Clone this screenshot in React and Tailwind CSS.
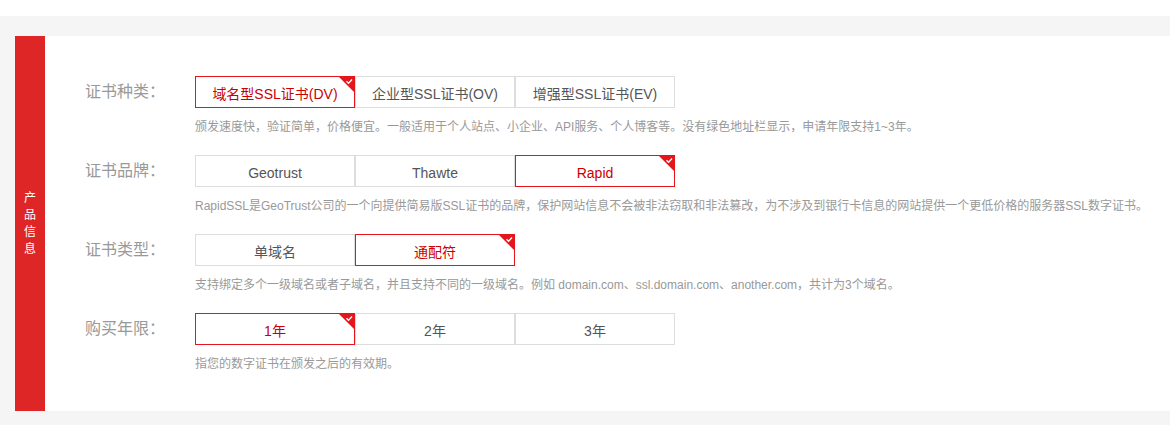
import React, { useState } from 'react';

const rows = [
  {
    label: '证书种类：',
    options: ['域名型SSL证书(DV)', '企业型SSL证书(OV)', '增强型SSL证书(EV)'],
    selected: 0,
    desc: '颁发速度快，验证简单，价格便宜。一般适用于个人站点、小企业、API服务、个人博客等。没有绿色地址栏显示，申请年限支持1~3年。',
  },
  {
    label: '证书品牌：',
    options: ['Geotrust', 'Thawte', 'Rapid'],
    selected: 2,
    desc: 'RapidSSL是GeoTrust公司的一个向提供简易版SSL证书的品牌，保护网站信息不会被非法窃取和非法篡改，为不涉及到银行卡信息的网站提供一个更低价格的服务器SSL数字证书。',
  },
  {
    label: '证书类型：',
    options: ['单域名', '通配符'],
    selected: 1,
    desc: '支持绑定多个一级域名或者子域名，并且支持不同的一级域名。例如 domain.com、ssl.domain.com、another.com，共计为3个域名。',
  },
  {
    label: '购买年限：',
    options: ['1年', '2年', '3年'],
    selected: 0,
    desc: '指您的数字证书在颁发之后的有效期。',
  },
];

function Corner() {
  return (
    <svg className="absolute -top-px -right-px" width="17" height="17" viewBox="0 0 17 17">
      <polygon points="0,0 17,0 17,17" fill="#e4161b" />
      <path d="M8.5 5.2 L10.6 7.2 L14 3.6" stroke="#fff" strokeWidth="1.4" fill="none" />
    </svg>
  );
}

function OptionRow({ row }) {
  const [sel, setSel] = useState(row.selected);
  return (
    <div className="flex">
      <div className="w-[110px] h-8 leading-8 text-base text-[#999]">{row.label}</div>
      <div>
        <div className="flex">
          {row.options.map((opt, i) => (
            <button
              key={i}
              onClick={() => setSel(i)}
              className={`relative w-[160px] h-8 pt-[3px] border text-sm ${
                i === sel
                  ? 'border-[#e4161b] text-[#cc0000]'
                  : 'border-[#dddddd] text-[#555]'
              }`}
            >
              {opt}
              {i === sel && <Corner />}
            </button>
          ))}
        </div>
        <p className="mt-[10px] text-xs leading-[18px] text-[#999]">{row.desc}</p>
      </div>
    </div>
  );
}

export default function App() {
  return (
    <div
      className="bg-white pt-4"
      style={{ fontFamily: '"Liberation Sans", "Noto Sans CJK SC", sans-serif' }}
    >
      <div className="bg-[#f5f5f5] pt-5 pl-[15px] pb-[14px]">
        <div className="flex">
          <div className="w-[30px] bg-[#df2627] flex items-center justify-center">
            <div className="flex flex-col items-center text-white text-xs leading-[17px]">
              <span>产</span>
              <span>品</span>
              <span>信</span>
              <span>息</span>
            </div>
          </div>
          <div className="flex-1 bg-white pl-10 pt-10 pb-[38px] flex flex-col gap-[19px]">
            {rows.map((row, i) => (
              <OptionRow key={i} row={row} />
            ))}
          </div>
        </div>
      </div>
    </div>
  );
}
